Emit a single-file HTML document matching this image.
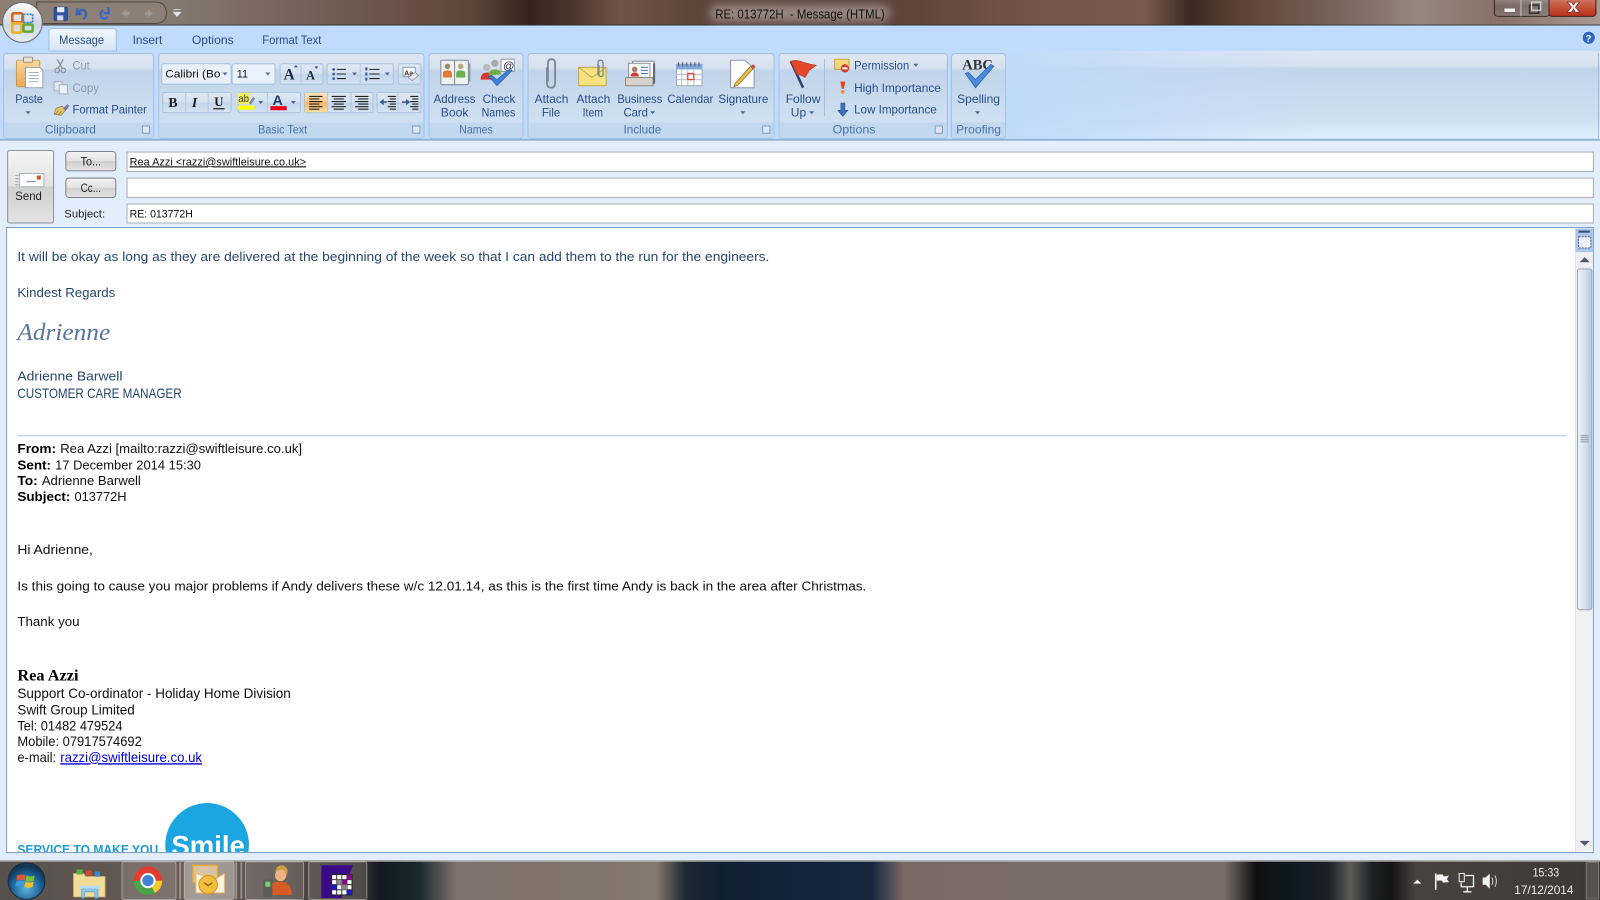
<!DOCTYPE html>
<html><head><meta charset="utf-8"><title>RE: 013772H - Message (HTML)</title>
<style>
html,body{margin:0;padding:0;width:1600px;height:900px;overflow:hidden;background:#e3eefd}
svg{display:block;position:absolute;left:0;top:0}
text{font-family:"Liberation Sans",sans-serif;white-space:pre}
text.s{font-family:"Liberation Serif",serif}
.r{font-size:11.5px;fill:#274d88}
.g{font-size:11.5px;fill:#4a72a8}
.d{font-size:11.5px;fill:#8b99ad}
.f{font-size:11px;fill:#111}
.b{font-size:13px;fill:#27466f}
.k{font-size:13px;fill:#111}
.kb{font-size:13px;fill:#000;font-weight:bold}
.a{font-size:13.4px;fill:#111}
.w{font-size:11.5px;fill:#eee}
</style></head><body>
<svg width="1600" height="900" viewBox="0 0 1568 882" xmlns="http://www.w3.org/2000/svg">
<defs>
<linearGradient id="tw" gradientUnits="userSpaceOnUse" x1="0" x2="1568" y1="0" y2="0">
<stop offset="0" stop-color="#8c7f72"/><stop offset=".106" stop-color="#857a70"/><stop offset=".1875" stop-color="#75625a"/><stop offset=".25" stop-color="#6a5048"/><stop offset=".294" stop-color="#5f463c"/><stop offset=".331" stop-color="#35241d"/><stop offset=".355" stop-color="#4a332b"/><stop offset=".3875" stop-color="#6f544b"/><stop offset=".4375" stop-color="#5d443b"/><stop offset=".556" stop-color="#5c423a"/><stop offset=".644" stop-color="#74544a"/><stop offset=".716" stop-color="#7a5a50"/><stop offset=".744" stop-color="#3a2a22"/><stop offset=".775" stop-color="#5e4238"/><stop offset=".833" stop-color="#78625a"/><stop offset=".886" stop-color="#94867e"/><stop offset=".9375" stop-color="#8a7068"/><stop offset="1" stop-color="#a89a90"/>
</linearGradient>
<linearGradient id="tb" gradientUnits="userSpaceOnUse" x1="0" x2="1568" y1="0" y2="0">
<stop offset="0" stop-color="#56504c"/><stop offset=".125" stop-color="#6b5d55"/><stop offset=".225" stop-color="#3a3532"/><stop offset=".2375" stop-color="#141820"/><stop offset=".262" stop-color="#1a2a30"/><stop offset=".285" stop-color="#7f716b"/><stop offset=".41" stop-color="#85786f"/><stop offset=".428" stop-color="#1e2a30"/><stop offset=".45" stop-color="#121f33"/><stop offset=".545" stop-color="#16273f"/><stop offset=".565" stop-color="#7a6a66"/><stop offset=".765" stop-color="#7a6e68"/><stop offset=".785" stop-color="#0e1012"/><stop offset=".8125" stop-color="#0f1a22"/><stop offset=".83" stop-color="#1a2028"/><stop offset=".844" stop-color="#5a5a58"/><stop offset=".858" stop-color="#1a2020"/><stop offset=".87" stop-color="#151515"/><stop offset=".885" stop-color="#4a423e"/><stop offset="1" stop-color="#3e3834"/>
</linearGradient>
<linearGradient id="grp" x1="0" x2="0" y1="0" y2="1">
<stop offset="0" stop-color="#dfe7f2"/><stop offset=".17" stop-color="#d6e1ef"/><stop offset=".2" stop-color="#c2d4ea"/><stop offset=".8" stop-color="#cfe0f2"/><stop offset="1" stop-color="#dff0fd"/>
</linearGradient>
<linearGradient id="fade" x1="0" x2="1" y1="0" y2="0"><stop offset="0" stop-color="#c0daf9"/><stop offset="1" stop-color="#c0daf9" stop-opacity="0"/></linearGradient>
<linearGradient id="btn" x1="0" x2="0" y1="0" y2="1"><stop offset="0" stop-color="#dfe9f6"/><stop offset=".5" stop-color="#d3e0f0"/><stop offset=".5" stop-color="#c3d5ea"/><stop offset="1" stop-color="#d6e4f4"/></linearGradient>
<linearGradient id="act" x1="0" x2="0" y1="0" y2="1"><stop offset="0" stop-color="#fde3b8"/><stop offset=".45" stop-color="#fbc98a"/><stop offset=".5" stop-color="#fab367"/><stop offset="1" stop-color="#fddf9e"/></linearGradient>
<linearGradient id="tab" x1="0" x2="0" y1="0" y2="1"><stop offset="0" stop-color="#f4f8fd"/><stop offset="1" stop-color="#d5e4f5"/></linearGradient>
<linearGradient id="grey" x1="0" x2="0" y1="0" y2="1"><stop offset="0" stop-color="#f4f4f4"/><stop offset=".5" stop-color="#e2e2e2"/><stop offset=".5" stop-color="#d0d0d0"/><stop offset="1" stop-color="#e2e2e2"/></linearGradient>
<linearGradient id="thumb" x1="0" x2="1" y1="0" y2="0"><stop offset="0" stop-color="#eef3f9"/><stop offset=".5" stop-color="#d5e0ee"/><stop offset="1" stop-color="#b5c6dc"/></linearGradient>
<linearGradient id="tbtn" x1="0" x2="0" y1="0" y2="1"><stop offset="0" stop-color="#fff" stop-opacity=".35"/><stop offset=".5" stop-color="#fff" stop-opacity=".12"/><stop offset="1" stop-color="#fff" stop-opacity=".2"/></linearGradient>
<linearGradient id="close" x1="0" x2="0" y1="0" y2="1"><stop offset="0" stop-color="#d08a78"/><stop offset=".5" stop-color="#c8553c"/><stop offset="1" stop-color="#b8301c"/></linearGradient>
<linearGradient id="orb" x1="0" x2="0" y1="0" y2="1"><stop offset="0" stop-color="#fdfdfd"/><stop offset=".55" stop-color="#cfd6e0"/><stop offset="1" stop-color="#e6ecf4"/></linearGradient>
<radialGradient id="win" cx=".5" cy=".7" r=".6"><stop offset="0" stop-color="#5cb4e0"/><stop offset=".7" stop-color="#1a5a90"/><stop offset="1" stop-color="#123654"/></radialGradient>
<linearGradient id="clip" x1="0" x2="0" y1="0" y2="1"><stop offset="0" stop-color="#fbd89a"/><stop offset="1" stop-color="#eca84f"/></linearGradient>
<filter id="bl" x="-20%" y="-60%" width="140%" height="220%"><feGaussianBlur stdDeviation="5"/></filter>
<clipPath id="body"><rect x="7" y="224" width="1537" height="611"/></clipPath>
</defs>

<!-- wallpaper strips -->
<rect x="0" y="0" width="1568" height="25" fill="url(#tw)"/>
<rect x="0" y="24" width="1568" height="1" fill="#2c2c2c" opacity=".8"/>
<rect x="696" y="5" width="176" height="16" rx="6" fill="#e8e4e0" opacity=".45" filter="url(#bl)"/>
<text x="701" y="18" font-size="12.5" fill="#111" textLength="166" lengthAdjust="spacingAndGlyphs">RE: 013772H  - Message (HTML)</text>

<!-- window buttons -->
<rect x="1464" y="-4" width="100" height="20" rx="3" fill="#000" opacity=".25"/>
<rect x="1464.5" y="-4" width="54" height="20" rx="3" fill="url(#tbtn)" stroke="#3a2c28"/>
<line x1="1490.5" y1="0" x2="1490.5" y2="16" stroke="#e8e0dc" opacity=".7"/>
<rect x="1518" y="-4" width="46" height="20" rx="3" fill="url(#close)" stroke="#3a2420"/>
<rect x="1474" y="8" width="11" height="4" fill="#f0f0f0" stroke="#555" stroke-width=".5"/>
<rect x="1499" y="5" width="9" height="8" fill="none" stroke="#333" stroke-width="1.5"/><rect x="1501" y="2" width="9" height="8" fill="none" stroke="#eee" stroke-width="1"/>
<path d="M1536 2h4l2 3 2-3h4l-4 5 4 5h-4l-2-3-2 3h-4l4-5z" fill="#f4f0ee" stroke="#5a2a20" stroke-width=".6"/>

<!-- QAT -->
<path d="M36 2H152Q163 2 163 13Q163 23 152 23H36Z" fill="#8d8078" fill-opacity=".85" stroke="#55473f"/>
<rect x="53" y="7" width="13" height="13" rx="1" fill="#2f54a8" stroke="#1b2f6a" stroke-width=".6"/><rect x="56" y="7" width="7" height="5" fill="#e4ecf8"/><rect x="56" y="15" width="6" height="5" fill="#cfd9ea"/>
<path d="M76 8l-1 6 5-.5M76 13q5-6 8-1q1 3-2 7" fill="none" stroke="#3a63b8" stroke-width="2.3"/>
<path d="M106 7l.8 6-5-.3M101 10q-4 3-1.500 7q3 3 6-.5" fill="none" stroke="#3a68c0" stroke-width="2.3"/>
<path d="M119 13l5-4v2.500h3v3h-3v2.500z M150 13l-5-4v2.500h-3v3h3v2.500z" fill="#a9aeb6" opacity=".55"/>
<path d="M170 9.500h7M170 12h7l-3.500 4z" fill="#dde4ee" stroke="#dde4ee" stroke-width=".8"/>

<!-- tab band -->
<rect x="0" y="25" width="1568" height="25" fill="#bfdbff"/>
<rect x="0" y="50" width="1568" height="87" fill="#bfdbff"/>
<path d="M48 50V31q0-3 3-3H111q3 0 3 3V50Z" fill="url(#tab)" stroke="#a2bedf"/>
<text class="r" x="58" y="43" textLength="44" lengthAdjust="spacingAndGlyphs">Message</text>
<text class="r" x="130" y="43" textLength="29" lengthAdjust="spacingAndGlyphs">Insert</text>
<text class="r" x="188" y="43" textLength="41" lengthAdjust="spacingAndGlyphs">Options</text>
<text class="r" x="257" y="43" textLength="58" lengthAdjust="spacingAndGlyphs">Format Text</text>
<circle cx="1557" cy="37" r="6.500" fill="#2f68c4" stroke="#d5e4f8"/><text x="1553.500" y="41" font-size="10" font-weight="bold" fill="#fff">?</text>

<!-- office orb -->
<circle cx="22" cy="22" r="19.500" fill="url(#orb)" stroke="#6a6a6a"/>
<rect x="12" y="13" width="10" height="9" rx="1.500" fill="none" stroke="#d8661a" stroke-width="2.500"/>
<rect x="23" y="14" width="9" height="8" fill="none" stroke="#3a80c8" stroke-width="1.600" stroke-dasharray="2 1"/>
<rect x="12" y="23" width="9" height="9" rx="1" fill="none" stroke="#e8b52a" stroke-width="2.500"/>
<rect x="23" y="24" width="9" height="7" rx="1" fill="none" stroke="#5ca838" stroke-width="2.500"/>

<!-- ribbon groups -->
<rect x="987" y="50" width="581" height="86" fill="url(#grp)"/>
<rect x="987" y="50" width="300" height="86" fill="url(#fade)"/>
<path d="M1566.500 52V135" stroke="#a5c0df"/>
<g stroke="#a5c0df" stroke-width="1">
<rect x="3.500" y="52.500" width="147" height="83" rx="3" fill="url(#grp)"/>
<rect x="155.500" y="52.500" width="260" height="83" rx="3" fill="url(#grp)"/>
<rect x="420.500" y="52.500" width="92" height="83" rx="3" fill="url(#grp)"/>
<rect x="517.500" y="52.500" width="241" height="83" rx="3" fill="url(#grp)"/>
<rect x="763.500" y="52.500" width="165" height="83" rx="3" fill="url(#grp)"/>
<rect x="932.500" y="52.500" width="53" height="83" rx="3" fill="url(#grp)"/>
</g>
<g fill="#c2d8ef">
<rect x="4" y="120" width="146" height="15"/><rect x="156" y="120" width="259" height="15"/><rect x="421" y="120" width="91" height="15"/><rect x="518" y="120" width="240" height="15"/><rect x="764" y="120" width="164" height="15"/><rect x="933" y="120" width="52" height="15"/>
</g>
<rect x="0" y="136" width="1568" height="2" fill="#8fb4d8"/>
<rect x="0" y="138" width="1568" height="85" fill="#e3eefd"/>

<text class="g" x="44" y="131" textLength="50" lengthAdjust="spacingAndGlyphs">Clipboard</text>
<text class="g" x="253" y="131" textLength="48" lengthAdjust="spacingAndGlyphs">Basic Text</text>
<text class="g" x="450" y="131" textLength="33" lengthAdjust="spacingAndGlyphs">Names</text>
<text class="g" x="611" y="131" textLength="37" lengthAdjust="spacingAndGlyphs">Include</text>
<text class="g" x="816" y="131" textLength="42" lengthAdjust="spacingAndGlyphs">Options</text>
<text class="g" x="937" y="131" textLength="44" lengthAdjust="spacingAndGlyphs">Proofing</text>
<g fill="#dfe8f2" stroke="#6f8fb4" stroke-width=".8">
<rect x="139.500" y="123.500" width="7" height="7"/><rect x="404.500" y="123.500" width="7" height="7"/><rect x="747.500" y="123.500" width="7" height="7"/><rect x="916.500" y="123.500" width="7" height="7"/>
</g>

<!-- clipboard -->
<rect x="16" y="59" width="23" height="26" rx="2" fill="url(#clip)" stroke="#b88a45" stroke-width=".7"/>
<rect x="23" y="56" width="9" height="5" rx="1" fill="#e8e4d8" stroke="#8a7a5c" stroke-width=".8"/>
<path d="M25 66h14l3 3v17H25Z" fill="#fff" stroke="#7f8ea6" stroke-width=".8"/>
<path d="M28 71h10M28 74h10M28 77h10M28 80h10" stroke="#a8b4c6"/>
<text class="r" x="15" y="101" textLength="27" lengthAdjust="spacingAndGlyphs">Paste</text>
<path d="M25 109h5l-2.500 3z" fill="#4a6a94"/>
<path d="M56 58l5 9M62 58l-5 9" stroke="#8e98a4" stroke-width="1.300"/><circle cx="56" cy="69" r="2.200" fill="none" stroke="#8e98a4" stroke-width="1.300"/><circle cx="62" cy="69" r="2.200" fill="none" stroke="#8e98a4" stroke-width="1.300"/>
<text class="d" x="71" y="68" textLength="17" lengthAdjust="spacingAndGlyphs">Cut</text>
<rect x="53" y="80" width="8" height="9" fill="#dfe6ee" stroke="#a4afbc"/><rect x="58" y="83" width="8" height="9" fill="#eef2f6" stroke="#a4afbc"/>
<text class="d" x="71" y="90" textLength="26" lengthAdjust="spacingAndGlyphs">Copy</text>
<path d="M61 107l5-5 2 2-4 5z" fill="#7a7aa6"/><path d="M55 106l6-2 3 4-4 5-7-1z" fill="#e2c36a" stroke="#86703a" stroke-width=".6"/><path d="M54 112l3-3M57 113l3-4" stroke="#86703a" stroke-width=".7"/>
<text class="r" x="71" y="111" textLength="73" lengthAdjust="spacingAndGlyphs">Format Painter</text>

<!-- basic text -->
<g stroke="#a9c1dc" stroke-width="1">
<rect x="158.500" y="62.500" width="68" height="20" rx="2" fill="#e9f1fb"/>
<rect x="227.500" y="62.500" width="42" height="20" rx="2" fill="#e9f1fb"/>
<rect x="274.500" y="62.500" width="42" height="20" rx="2" fill="url(#btn)"/>
<rect x="320.500" y="62.500" width="65" height="20" rx="2" fill="url(#btn)"/>
<rect x="390.500" y="62.500" width="22" height="20" rx="2" fill="url(#btn)"/>
<rect x="159.500" y="90.500" width="67" height="20" rx="2" fill="url(#btn)"/>
<rect x="233.500" y="90.500" width="61" height="20" rx="2" fill="url(#btn)"/>
<rect x="298.500" y="90.500" width="67" height="20" rx="2" fill="url(#btn)"/>
<rect x="369.500" y="90.500" width="43" height="20" rx="2" fill="url(#btn)"/>
</g>
<rect x="299" y="91" width="22" height="19" fill="url(#act)"/>
<path d="M182 91v19M204 91v19M321 91v19M344 91v19M390 91v19M295 63v19M353 63v19M262 91v19" stroke="#b4c8e0" fill="none"/>
<text class="f" x="162" y="76" textLength="54" lengthAdjust="spacingAndGlyphs">Calibri (Bo</text>
<text class="f" x="232" y="76" textLength="11" lengthAdjust="spacingAndGlyphs">11</text>
<path d="M218 71h5l-2.500 3zM260 71h5l-2.500 3zM345 71h5l-2.500 3zM377 71h5l-2.500 3zM253 99h5l-2.500 3zM285 99h5l-2.500 3z" fill="#556f92"/>
<text class="s" x="278" y="78" font-size="15" font-weight="bold" fill="#222c3c">A</text>
<text class="s" x="300" y="78" font-size="12" font-weight="bold" fill="#222c3c">A</text>
<path d="M288 66h4l-2-2.500zM308 65h4l-2 2.500z" fill="#3a5a90"/>
<g stroke="#222" stroke-width="1"><path d="M330 68h9M330 72.500h9M330 77h9M362 68h10M362 72.500h10M362 77h10" fill="none"/></g>
<g fill="#2d5aa0"><circle cx="327" cy="68" r="1.300"/><circle cx="327" cy="72.500" r="1.300"/><circle cx="327" cy="77" r="1.300"/><rect x="358" y="66" width="2" height="3"/><rect x="358" y="71" width="2" height="3"/><rect x="358" y="76" width="2" height="3"/></g>
<rect x="395" y="66" width="12" height="9" fill="#fff" stroke="#8aa0bc"/><text x="396" y="74" font-size="7" font-weight="bold" fill="#333">Aa</text><path d="M400 76l7-5 3 3-6 5z" fill="#e8e8f0" stroke="#8890a4" stroke-width=".7"/>
<text class="s" x="165" y="105" font-size="13.500" font-weight="bold" fill="#1c1c1c">B</text>
<text class="s" x="188" y="105" font-size="13.500" font-weight="bold" font-style="italic" fill="#1c1c1c">I</text>
<text class="s" x="210" y="104" font-size="12.500" font-weight="bold" fill="#1c1c1c">U</text><rect x="209" y="106" width="11" height="1.200" fill="#1c1c1c"/>
<rect x="233" y="91" width="12" height="11" fill="#f6ef60"/><text x="233.500" y="100" font-size="9.500" fill="#333">ab</text><path d="M244 101l4-6 2 1.500-4 6z" fill="#7a8aa8"/><rect x="233" y="103.500" width="16" height="4" fill="#ffff00"/>
<text x="267" y="103" font-size="14" font-weight="bold" fill="#23406e">A</text><rect x="265" y="104" width="16" height="4" fill="#e8001c"/>
<g stroke="#222" stroke-width="1.100" fill="none">
<path d="M303 94.500h13M303 97h10M303 99.500h13M303 102h10M303 104.500h13M303 107h10"/>
<path d="M325 94.500h14M327 97h10M325 99.500h14M327 102h10M325 104.500h14M327 107h10"/>
<path d="M348 94.500h13M351 97h10M348 99.500h13M351 102h10M348 104.500h13M351 107h10"/>
<path d="M380 94.500h8M382 97h6M380 99.500h8M382 102h6M380 104.500h8M382 107h6M373 100h6" />
<path d="M402 94.500h8M404 97h6M402 99.500h8M404 102h6M402 104.500h8M404 107h6M394 100h6"/>
</g>
<path d="M372 100l4-3v6zM402 100l-4-3v6z" fill="#2d5aa0"/>

<!-- names -->
<rect x="432" y="59" width="27" height="24" rx="1" fill="#f0f2f2" stroke="#7c8a9c"/><line x1="445.500" y1="59" x2="445.500" y2="83" stroke="#7c8a9c"/><rect x="459" y="62" width="2" height="18" fill="#8a9aa8"/>
<circle cx="438.500" cy="65" r="2.700" fill="#9c8a70"/><path d="M434 76v-4q0-3 4.500-3t4.500 3v4z" fill="#e47a30"/>
<circle cx="451.500" cy="65" r="2.700" fill="#b8a878"/><path d="M447 76v-4q0-3 4.500-3t4.500 3v4z" fill="#6ab04c"/>
<circle cx="485" cy="62" r="3.500" fill="#a6a6a6"/><circle cx="477" cy="66" r="3.500" fill="#b8b8b8"/>
<path d="M471 78q0-7 6-7t6 7z" fill="#d23a32"/><path d="M479 74q0-6 6-6t6 5z" fill="#72ae48"/>
<rect x="491" y="58" width="13" height="12" fill="#fff" stroke="#8d98a8"/><text x="493" y="68" font-size="11" fill="#335">@</text>
<path d="M479 75l8 9 15-15-3-1-12 10-5-4z" fill="#3f80d8" stroke="#2858a0" stroke-width=".6"/>
<text class="r" x="425" y="101" textLength="41" lengthAdjust="spacingAndGlyphs">Address</text><text class="r" x="432" y="114" textLength="27" lengthAdjust="spacingAndGlyphs">Book</text>
<text class="r" x="473" y="101" textLength="32" lengthAdjust="spacingAndGlyphs">Check</text><text class="r" x="472" y="114" textLength="33" lengthAdjust="spacingAndGlyphs">Names</text>

<!-- include -->
<path d="M536 66v15q0 5 4 5t4-5V62q0-4-3.500-4t-3.500 4v18" fill="none" stroke="#7e8894" stroke-width="1.800"/>
<rect x="567" y="66" width="27" height="18" fill="#f6e27e" stroke="#c2a84a"/><path d="M567 66l13 10 14-10" fill="none" stroke="#c2a84a"/>
<path d="M586 74V62q0-3 2.500-3t2.500 3v11q0 2-2 2t-2-2V64" fill="none" stroke="#7e8894" stroke-width="1.300"/>
<rect x="620" y="60" width="21" height="17" fill="#fff" stroke="#7e8894"/><rect x="616" y="62" width="21" height="17" fill="#f4f4f4" stroke="#8d96a3"/>
<circle cx="622" cy="68" r="2.700" fill="#a38070"/><path d="M618 75q0-4 4-4t4 4z" fill="#cc3c34"/><path d="M628 66h7M628 69h7M628 72h7" stroke="#5078b0"/>
<rect x="613" y="76" width="27" height="8" fill="#d5d2c8" stroke="#8d8a80"/><rect x="640" y="62" width="2" height="20" fill="#606870"/>
<rect x="663" y="63" width="25" height="21" fill="#fff" stroke="#9aa8ba"/><rect x="663" y="63" width="25" height="5" fill="#7ea6d8"/>
<path d="M668 68v16M674 68v16M680 68v16M663 73h25M663 78h25" stroke="#b8c4d4" fill="none"/><rect x="674" y="72" width="6" height="6" fill="none" stroke="#d8503a" stroke-width="1.300"/>
<path d="M665 61v4M669 61v4M673 61v4M677 61v4M681 61v4M685 61v4" stroke="#556"/>
<path d="M716 59h14l9 8v19h-23z" fill="#fff" stroke="#8c97a6"/><path d="M721 81l-2 4 4-1.500 15-16-2.500-2.500z" fill="#eec04a" stroke="#7c6a34" stroke-width=".7"/><path d="M736 65l2.500 2.500 2-2-2.500-2.500z" fill="#c9453a"/>
<text class="r" x="524" y="101" textLength="33" lengthAdjust="spacingAndGlyphs">Attach</text><text class="r" x="531" y="114" textLength="18" lengthAdjust="spacingAndGlyphs">File</text>
<text class="r" x="565" y="101" textLength="33" lengthAdjust="spacingAndGlyphs">Attach</text><text class="r" x="571" y="114" textLength="20" lengthAdjust="spacingAndGlyphs">Item</text>
<text class="r" x="605" y="101" textLength="44" lengthAdjust="spacingAndGlyphs">Business</text><text class="r" x="611" y="114" textLength="24" lengthAdjust="spacingAndGlyphs">Card</text><path d="M637 109h5l-2.500 3z" fill="#4a6a94"/>
<text class="r" x="654" y="101" textLength="45" lengthAdjust="spacingAndGlyphs">Calendar</text>
<text class="r" x="704" y="101" textLength="49" lengthAdjust="spacingAndGlyphs">Signature</text><path d="M725.500 109h5l-2.500 3z" fill="#4a6a94"/>

<!-- options -->
<path d="M775 60l12 26" stroke="#2e3f6e" stroke-width="2.500"/><path d="M775 60q5-2 12 1q7 2 13 3l-7 5-4 7q-4-3-8-3z" fill="#e2482a" stroke="#b0301a" stroke-width=".5"/>
<line x1="808" y1="58" x2="808" y2="114" stroke="#a8bedc"/>
<text class="r" x="770" y="101" textLength="34" lengthAdjust="spacingAndGlyphs">Follow</text><text class="r" x="775" y="114" textLength="15" lengthAdjust="spacingAndGlyphs">Up</text><path d="M793 109h5l-2.500 3z" fill="#4a6a94"/>
<rect x="818" y="58" width="14" height="10" fill="#f4d87c" stroke="#c2902a" stroke-width=".8"/><circle cx="828" cy="67" r="4" fill="#d83a2a"/><rect x="825.500" y="66" width="5" height="2" fill="#fff"/>
<text class="r" x="837" y="68" textLength="54" lengthAdjust="spacingAndGlyphs">Permission</text><path d="M895 62.500h5l-2.500 3z" fill="#4a6a94"/>
<path d="M823.500 80h5l-1.500 7h-2z" fill="#dc4a2a"/><circle cx="826" cy="90" r="1.700" fill="#e8843a"/>
<text class="r" x="837" y="90" textLength="85" lengthAdjust="spacingAndGlyphs">High Importance</text>
<path d="M824 101h4v7h3l-5 6-5-6h3z" fill="#3f70c4" stroke="#2a4c90" stroke-width=".5"/>
<text class="r" x="837" y="111" textLength="81" lengthAdjust="spacingAndGlyphs">Low Importance</text>

<!-- proofing -->
<text class="s" x="943" y="68" font-size="14.500" font-weight="bold" fill="#333" textLength="30" lengthAdjust="spacingAndGlyphs">ABC</text>
<path d="M946 72l10 14 18-21-3-2-15 15-7-7z" fill="#4b8ae0" stroke="#2a5ca8" stroke-width=".7"/>
<text class="r" x="938" y="101" textLength="42" lengthAdjust="spacingAndGlyphs">Spelling</text><path d="M955.500 109h5l-2.500 3z" fill="#4a6a94"/>

<!-- form -->
<rect x="7.500" y="147.500" width="45" height="71" rx="2" fill="url(#grey)" stroke="#8d9096"/>
<rect x="19" y="170" width="24" height="13" fill="#fff" stroke="#a8b0be"/><rect x="36" y="172" width="4" height="4" fill="#d0562e"/><path d="M26 178h9" stroke="#7a8aa0"/><path d="M15 172h3M15 175h3M15 178h3M15 181h3" stroke="#9aa6b8"/>
<text x="15" y="196" font-size="11.500" fill="#222" textLength="26" lengthAdjust="spacingAndGlyphs">Send</text>
<rect x="64.500" y="148.500" width="49" height="19" rx="3" fill="url(#grey)" stroke="#7f848c"/>
<rect x="64.500" y="174.500" width="49" height="19" rx="3" fill="url(#grey)" stroke="#7f848c"/>
<text x="79" y="162" font-size="11.500" fill="#222" textLength="20" lengthAdjust="spacingAndGlyphs">To...</text>
<text x="79" y="188" font-size="11.500" fill="#222" textLength="20" lengthAdjust="spacingAndGlyphs">Cc...</text>
<text x="63" y="213" font-size="11" fill="#222" textLength="40" lengthAdjust="spacingAndGlyphs">Subject:</text>
<rect x="124.500" y="149" width="1437" height="19" fill="#fff" stroke="#abafb3"/>
<rect x="124.500" y="174.500" width="1437" height="19" fill="#fff" stroke="#abafb3"/>
<rect x="124.500" y="200" width="1437" height="18.500" fill="#fff" stroke="#abafb3"/>
<text class="f" x="127" y="162" textLength="173" lengthAdjust="spacingAndGlyphs" text-decoration="underline">Rea Azzi &lt;razzi@swiftleisure.co.uk&gt;</text>
<text class="f" x="127" y="213" textLength="62" lengthAdjust="spacingAndGlyphs">RE: 013772H</text>

<!-- body -->
<rect x="6.500" y="223" width="1555" height="612.500" fill="#fff" stroke="#7a9ec8"/>
<text class="b" x="17" y="256" textLength="737" lengthAdjust="spacingAndGlyphs">It will be okay as long as they are delivered at the beginning of the week so that I can add them to the run for the engineers.</text>
<text class="b" x="17" y="291" textLength="96" lengthAdjust="spacingAndGlyphs">Kindest Regards</text>
<text class="s" x="17" y="333" font-style="italic" font-size="24" fill="#5a7698" textLength="91" lengthAdjust="spacingAndGlyphs">Adrienne</text>
<text class="b" x="17" y="373" textLength="103" lengthAdjust="spacingAndGlyphs">Adrienne Barwell</text>
<text class="b" x="17" y="390" style="font-size:13.500px" textLength="161" lengthAdjust="spacingAndGlyphs">CUSTOMER CARE MANAGER</text>
<rect x="17" y="426.500" width="1518" height="1" fill="#b5c4df"/>
<text class="kb" x="17" y="444" textLength="38" lengthAdjust="spacingAndGlyphs">From:</text><text class="k" x="59" y="444" textLength="237" lengthAdjust="spacingAndGlyphs">Rea Azzi [mailto:razzi@swiftleisure.co.uk]</text>
<text class="kb" x="17" y="460" textLength="33" lengthAdjust="spacingAndGlyphs">Sent:</text><text class="k" x="54" y="460" textLength="143" lengthAdjust="spacingAndGlyphs">17 December 2014 15:30</text>
<text class="kb" x="17" y="475.500" textLength="20" lengthAdjust="spacingAndGlyphs">To:</text><text class="k" x="41" y="475.500" textLength="97" lengthAdjust="spacingAndGlyphs">Adrienne Barwell</text>
<text class="kb" x="17" y="491" textLength="52" lengthAdjust="spacingAndGlyphs">Subject:</text><text class="k" x="73" y="491" textLength="51" lengthAdjust="spacingAndGlyphs">013772H</text>
<text class="k" x="17" y="543" textLength="74" lengthAdjust="spacingAndGlyphs">Hi Adrienne,</text>
<text class="k" x="17" y="578.500" textLength="832" lengthAdjust="spacingAndGlyphs">Is this going to cause you major problems if Andy delivers these w/c 12.01.14, as this is the first time Andy is back in the area after Christmas.</text>
<text class="k" x="17" y="613.500" textLength="61" lengthAdjust="spacingAndGlyphs">Thank you</text>
<text class="s" x="17" y="667" font-size="15" font-weight="bold" fill="#000" textLength="60" lengthAdjust="spacingAndGlyphs">Rea Azzi</text>
<text class="a" x="17" y="684" textLength="268" lengthAdjust="spacingAndGlyphs">Support Co-ordinator - Holiday Home Division</text>
<text class="a" x="17" y="700" textLength="115" lengthAdjust="spacingAndGlyphs">Swift Group Limited</text>
<text class="a" x="17" y="716" textLength="103" lengthAdjust="spacingAndGlyphs">Tel: 01482 479524</text>
<text class="a" x="17" y="731" textLength="122" lengthAdjust="spacingAndGlyphs">Mobile: 07917574692</text>
<text class="a" x="17" y="747" textLength="38" lengthAdjust="spacingAndGlyphs">e-mail:</text>
<text class="a" x="59" y="747" textLength="139" lengthAdjust="spacingAndGlyphs" style="fill:#0000d8" text-decoration="underline">razzi@swiftleisure.co.uk</text>
<g clip-path="url(#body)">
<circle cx="203" cy="828" r="41" fill="#1ba6e2"/>
<text x="168" y="838" font-size="27" font-weight="bold" fill="#fff" textLength="72" lengthAdjust="spacingAndGlyphs">Smile</text>
<text x="17" y="837" font-size="13" font-weight="bold" fill="#1b9dd4" textLength="138" lengthAdjust="spacingAndGlyphs">SERVICE TO MAKE YOU</text>
</g>

<!-- scrollbar -->
<rect x="1544" y="224" width="17" height="611" fill="#f0f0f0"/>
<line x1="1544" y1="224" x2="1544" y2="835" stroke="#e4e4e4"/>
<rect x="1544" y="224" width="17" height="23" fill="#a9c4ec"/>
<rect x="1547" y="226" width="11" height="2" fill="#3a4a6a"/>
<rect x="1547" y="232" width="12" height="11" fill="#eef2f8" stroke="#556a88" stroke-dasharray="2 1"/>
<path d="M1548 255h10l-5-5z" fill="#4c5a78" transform="translate(0 2)"/>
<rect x="1546" y="263.500" width="14" height="334" rx="2" fill="url(#thumb)" stroke="#98a8bc"/>
<path d="M1549 427h8M1549 429h8M1549 431h8M1549 433h8" stroke="#8a9cb4"/>
<path d="M1548 824h10l-5 5z" fill="#4c5a78"/>

<!-- taskbar -->
<rect x="0" y="843" width="1568" height="39" fill="url(#tb)"/>
<rect x="0" y="843" width="1568" height="1.500" fill="#c8c8c8" opacity=".8"/>
<circle cx="26" cy="863.500" r="18" fill="url(#win)" stroke="#1a2a3a"/>
<path d="M17 858q4-2 8 0l-1 5q-4-2-8 0z" fill="#e8562a"/><path d="M26 858q4 2 8 0l-1 5q-4 2-8 0z" fill="#7cc02c"/><path d="M16 864q4-2 8 0l-1 5q-4-2-8 0z" fill="#3c9ce0"/><path d="M25 864q4 2 8 0l-1 5q-4 2-8 0z" fill="#f4c21e"/>
<path d="M72 856h10l2 3h19v20H72z" fill="#f3dc96" stroke="#c8ad66" stroke-width=".7"/><rect x="75" y="852" width="6" height="5" fill="#58b040"/><rect x="84" y="853" width="6" height="5" fill="#d24a32"/><rect x="93" y="854" width="5" height="5" fill="#3a8ad0"/>
<path d="M80 880v-9h16v9h-3v-6H83v6z" fill="#8fc8ea" stroke="#5a9cc8" stroke-width=".7"/><rect x="78" y="868" width="20" height="3" fill="#b8dcf2"/>
<g stroke="#d4d0cc" stroke-opacity=".55">
<rect x="119.500" y="844.500" width="53" height="37" rx="2" fill="#fff" fill-opacity=".14"/>
<rect x="180.500" y="844.500" width="49" height="37" rx="2" fill="#fff" fill-opacity=".38"/>
<rect x="240.500" y="844.500" width="57" height="37" rx="2" fill="#fff" fill-opacity=".14"/>
<rect x="302.500" y="844.500" width="57" height="37" rx="2" fill="#fff" fill-opacity=".12"/>
</g>
<path d="M176.500 845v36M231.500 845v36M236.500 845v36" stroke="#b8b4b0" stroke-opacity=".6" stroke-width="2"/>
<circle cx="145" cy="863" r="14" fill="#e23c2e"/>
<path d="M145 863L152 875.100A14 14 0 0 1 131 863Z" fill="#48a448"/>
<path d="M145 863h14a14 14 0 0 1-7 12.100z" fill="#f6c92e"/>
<circle cx="145" cy="863" r="6.500" fill="#3f80d8" stroke="#fff" stroke-width="2"/>
<path d="M189 848h24v15l-18 4-6-3z" fill="#fde0a8" fill-opacity=".6" stroke="#e8a83e" stroke-width="1.400"/>
<path d="M192 856l20 5 8-5v19h-28z" fill="#fdf3dc" stroke="#e8b868"/>
<circle cx="204" cy="867" r="9" fill="#f3bd3e" stroke="#d48e1e"/><path d="M200 865l4 3 4-3" fill="none" stroke="#8c5c10" stroke-width="1.300"/>
<circle cx="276" cy="854" r="6" fill="#cc9c48"/><path d="M262 877q0-13 12-13t12 13z" fill="#d85a24"/><circle cx="275" cy="858" r="5.500" fill="#eeb486"/>
<rect x="258" y="862" width="9" height="17" rx="1.500" fill="#5a5e58"/><rect x="260" y="864" width="5" height="5" fill="#7cd072"/>
<path d="M315 848h31l-7 16-4 16h-20z" fill="#3a0a88"/>
<rect x="325" y="857" width="20" height="20" fill="#fff" stroke="#222"/>
<path d="M325 862h20M325 867h20M325 872h20M330 857v20M335 857v20M340 857v20" stroke="#333"/>
<rect x="325" y="867" width="5" height="5" fill="#1a1ac0"/><rect x="340" y="872" width="5" height="5" fill="#1a1ac0"/><rect x="335" y="862" width="5" height="5" fill="#880a88"/><rect x="340" y="857" width="5" height="5" fill="#880a88"/><rect x="330" y="862" width="5" height="5" fill="#888"/><rect x="335" y="867" width="5" height="5" fill="#888"/>

<!-- tray -->
<path d="M1385 866h8l-4-4z" fill="#f2f2f2"/>
<path d="M1407 856v16" stroke="#f4f4f4" stroke-width="1.500"/><path d="M1408 857h6l1 2 5-1-2 3.500 2 3-6 .5-1-2h-5z" fill="#f4f4f4"/>
<path d="M1436 858h8v11h-12v-4M1434 874h8M1438 869v5" fill="none" stroke="#f4f4f4" stroke-width="1.300"/><rect x="1430" y="856" width="5" height="8" fill="none" stroke="#f4f4f4"/>
<path d="M1453 860h3l4-4v15l-4-4h-3z" fill="#f0f0f0"/><path d="M1462 860q2 3.500 0 7M1465 858q3 5.500 0 11" fill="none" stroke="#d8d8d8"/>
<text class="w" x="1502" y="859" font-size="11.500" textLength="26" lengthAdjust="spacingAndGlyphs">15:33</text>
<text class="w" x="1484" y="876" font-size="11.500" textLength="58" lengthAdjust="spacingAndGlyphs">17/12/2014</text>
<rect x="1554.500" y="845" width="12" height="36" fill="#fff" fill-opacity=".12" stroke="#aaa" stroke-opacity=".5"/>
</svg>
</body></html>
